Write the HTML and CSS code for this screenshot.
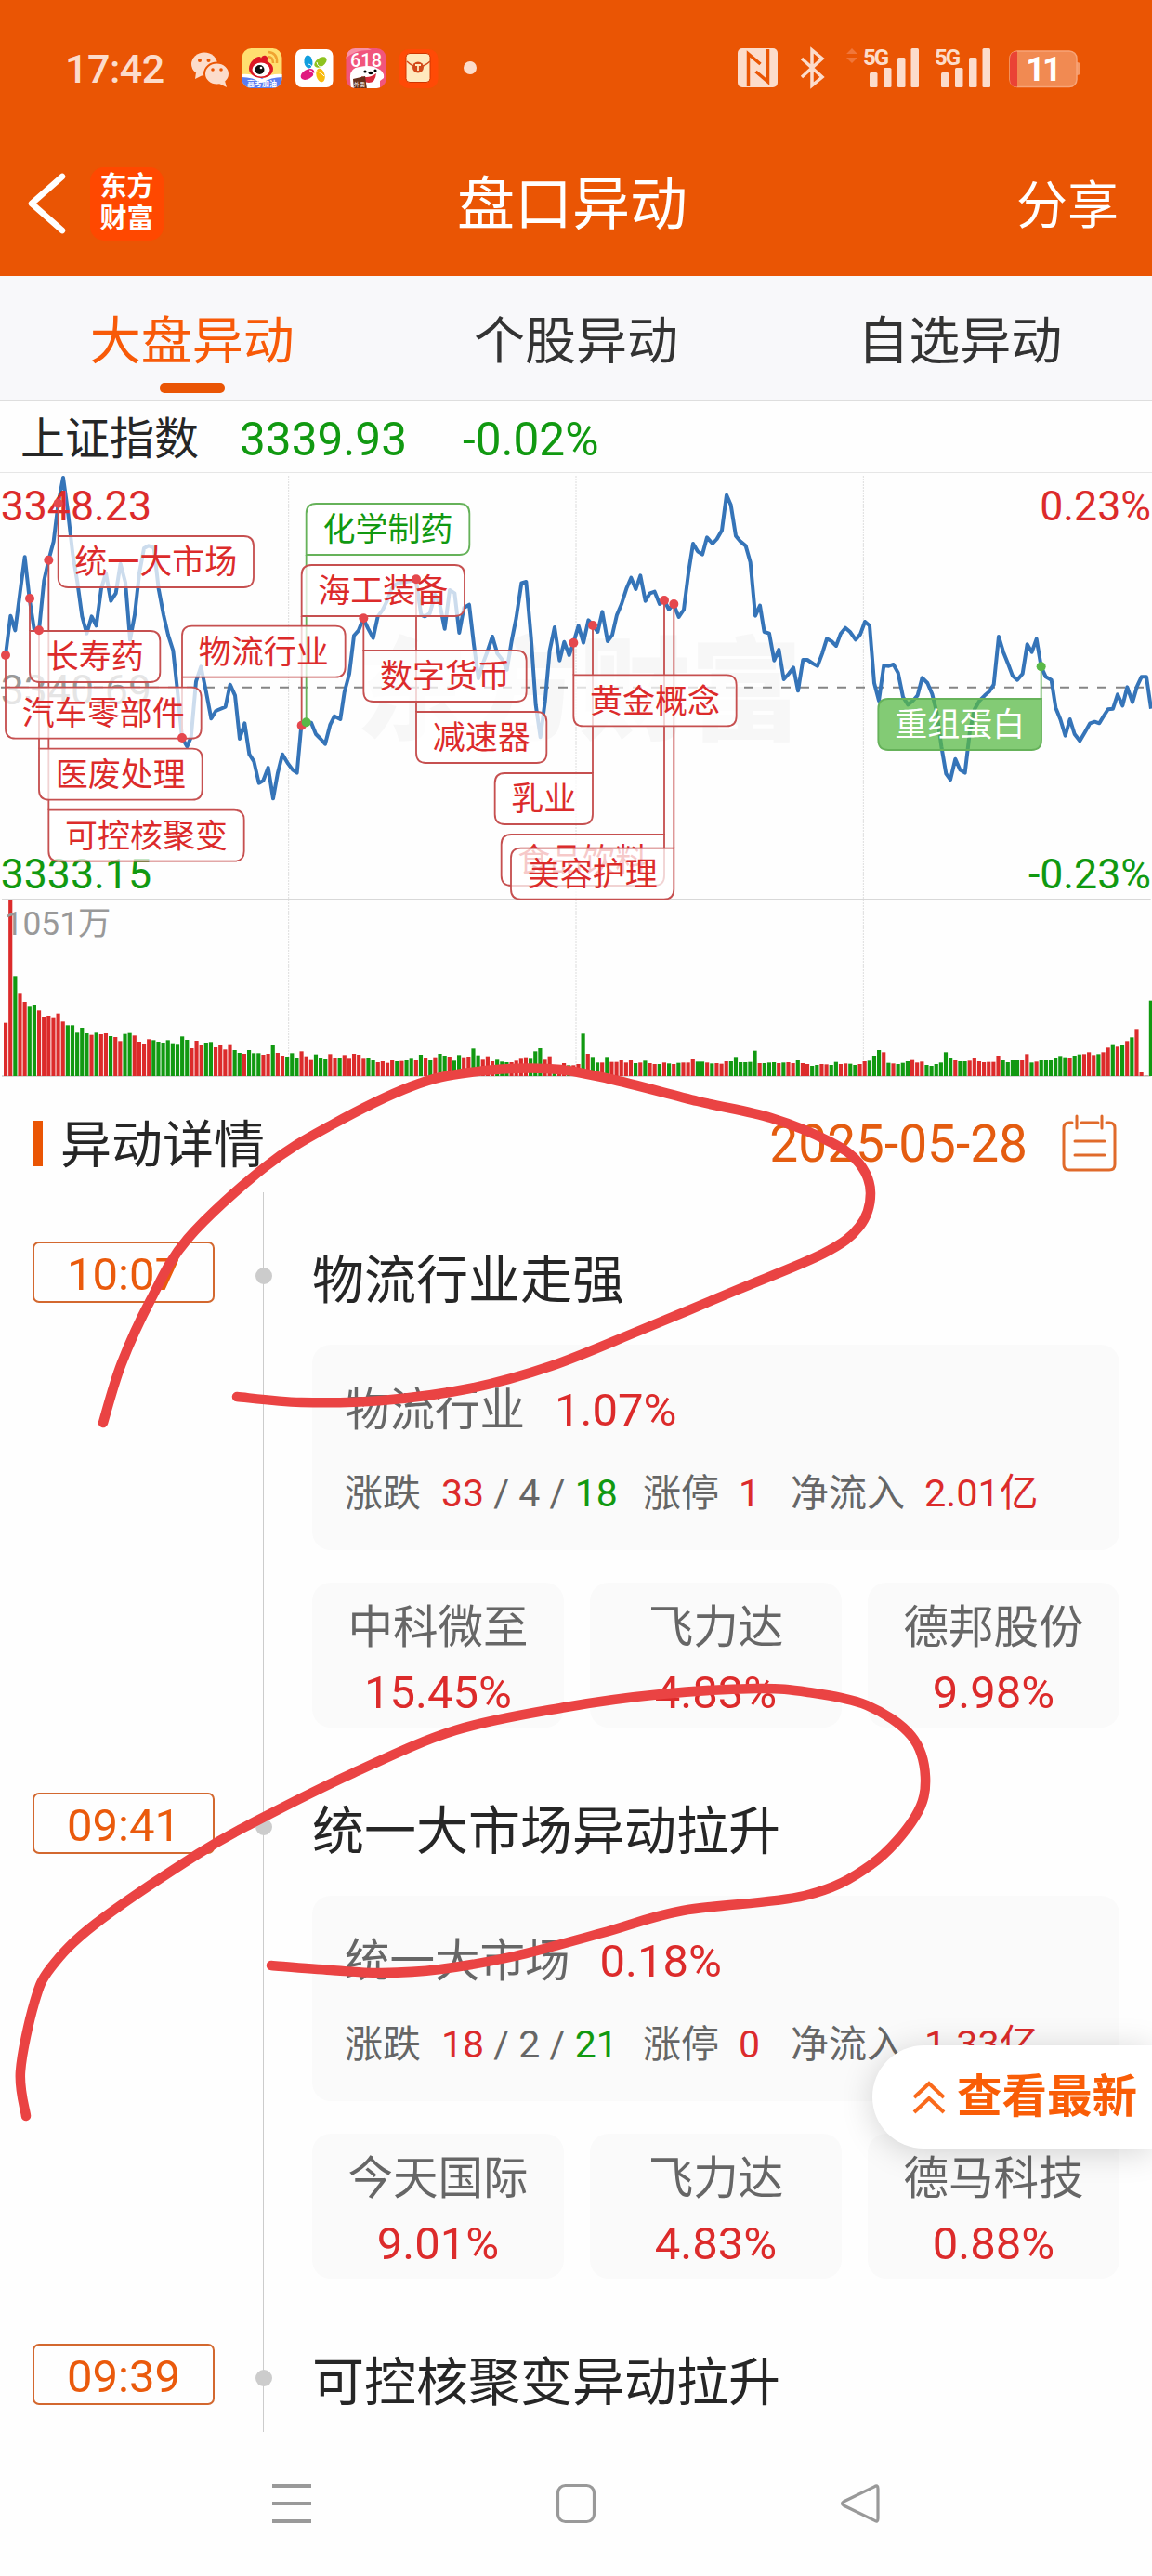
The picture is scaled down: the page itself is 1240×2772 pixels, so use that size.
FILE: index.html
```html
<!DOCTYPE html>
<html lang="zh-CN">
<head>
<meta charset="utf-8">
<title>盘口异动</title>
<link rel="stylesheet" href="styles.css">
</head>
<body>
<div class="screen">
  <header class="header">
    <div class="status">
      <span class="clock">17:42</span>
      <svg class="status-left" width="310" height="50" viewBox="0 0 310 50">
        <g fill="#fcdccb">
          <ellipse cx="14" cy="20" rx="14" ry="12.5"/><path d="M5 29l-1 7 8-4z"/>
          <g stroke="#ea5504" stroke-width="2"><ellipse cx="27.500" cy="30.500" rx="13.500" ry="12"/></g>
          <path d="M30 41l8 4-2-7z"/>
          <circle cx="300" cy="24" r="7"/>
        </g>
        <g fill="#ea5504"><circle cx="9" cy="16" r="2"/><circle cx="18.500" cy="16" r="2"/><circle cx="23" cy="26" r="1.800"/><circle cx="32" cy="26" r="1.800"/></g>
        <clipPath id="weibo"><rect x="54.500" y="3" width="43" height="43" rx="10"/></clipPath>
        <g clip-path="url(#weibo)">
          <rect x="54" y="3" width="44" height="44" fill="#ffdf70"/>
          <path d="M54 32q22 6 44 0v15h-44z" fill="#5b7df0"/>
          <path d="M54 31q12-1 22 5 10-6 22-5v3q-12 0-22 6-10-6-22-6z" fill="#fff"/>
          <path d="M62 25c0-7 7-13 11-13 2 0 2 2 2 2s1-4 5-3c4 2 1 5 2 6s6 3 6 8c0 7-7 10-13 10s-13-4-13-10z" fill="#dc1725"/>
          <ellipse cx="75" cy="26" rx="9.500" ry="7.500" fill="#fff"/><circle cx="73.500" cy="26" r="5" fill="#111"/><circle cx="75" cy="24" r="1.300" fill="#fff"/>
          <path d="M82 12q6 0 6 7M83 7q10 1 9 12" fill="none" stroke="#f0a332" stroke-width="2.500"/>
          <text x="76" y="44" class="badge-text">高考加油</text>
        </g>
        <rect x="112" y="4" width="40.500" height="41" rx="7" fill="#fff"/>
        <g transform="translate(132 25)">
          <ellipse cx="-6" cy="-7.500" rx="4.500" ry="7" fill="#129ede" transform="rotate(-8 -6 -7)"/>
          <ellipse cx="7" cy="-7" rx="4.500" ry="7.500" fill="#8ec31f" transform="rotate(55 7 -7)"/>
          <ellipse cx="-7" cy="6" rx="5" ry="8" fill="#e0197f" transform="rotate(60 -7 6)"/>
          <ellipse cx="7" cy="7" rx="4.500" ry="7.500" fill="#f8bb0c" transform="rotate(-15 7 7)"/>
          <path d="M-7-5q5 0 5 5M3-7q1 6 7 5M-5 2q5 0 5 7M3 3q4 0 8 5" stroke="#fff" fill="none"/>
        </g>
        <clipPath id="dog"><rect x="166.500" y="3" width="43" height="43" rx="10"/></clipPath>
        <g clip-path="url(#dog)">
          <rect x="166" y="3" width="44" height="44" fill="#f1557c"/>
          <path d="M166 14q10-10 28-9l-6-3h-22z" fill="#f990a5"/>
          <text x="188" y="23" class="promo-text">618</text>
          <path d="M171 36q-1-12 10-13 13-3 20 2 7 3 6 10l-4 3v10h-31z" fill="#fff"/>
          <path d="M183 33q8 3 16-3-1 10-8 10-6 0-8-7z" fill="#d92b3c"/>
          <circle cx="187" cy="28" r="1.600"/><circle cx="198" cy="27" r="1.600"/><ellipse cx="193" cy="29.500" rx="2.500" ry="1.800"/>
          <path d="M174 36l13-3 2 14h-14z" fill="#65301c"/>
          <text x="181" y="44" class="bag-text">外卖</text>
        </g>
        <rect x="223.500" y="4" width="42" height="42" rx="10" fill="#ff4a06"/>
        <rect x="231" y="8.500" width="26" height="31" rx="4" fill="#ffe9be" stroke="#cf3500"/>
        <path d="M232 17q12 12 25 0" fill="none" stroke="#d2491a" stroke-width="1.500"/>
        <circle cx="244" cy="23.500" r="6" fill="#d2491a"/><path d="M241 21h6M244 21v6" stroke="#ffe9be" stroke-width="1.800"/>
      </svg>
      <svg class="status-right" width="376" height="70" viewBox="788 40 376 70" fill="#fcdccb">
        <rect x="794" y="53" width="43" height="42" rx="5"/>
        <path d="M805.500 94V59l13 11M826.500 54v35l-13-11" fill="none" stroke="#ea5504" stroke-width="3.500"/>
        <path d="M863 64l22 20-11 9V55l11 9-22 20" fill="none" stroke="#fcdccb" stroke-width="3.500"/>
        <path d="M911 59h12l-6-6zM911 63h12l-6 6z" fill="#f0763a"/>
        <text x="929" y="71" class="net-text">5G</text>
        <rect x="936" y="79" width="8.500" height="16" rx="1.500"/><rect x="951" y="74" width="8.500" height="21" rx="1.500"/><rect x="966" y="63" width="8.500" height="32" rx="1.500"/><rect x="980.500" y="53" width="8.500" height="42" rx="1.500"/>
        <text x="1006" y="71" class="net-text">5G</text>
        <rect x="1013" y="79" width="8.500" height="16" rx="1.500"/><rect x="1028" y="74" width="8.500" height="21" rx="1.500"/><rect x="1043" y="63" width="8.500" height="32" rx="1.500"/><rect x="1057.500" y="53" width="8.500" height="42" rx="1.500"/>
        <path d="M1159 68q4 0 4 3v8q0 3-4 3z" fill="#f59a68"/>
        <rect x="1087" y="56" width="72" height="38.500" rx="8" fill="#f18a52" stroke="#f7a478" stroke-width="1.500"/>
        <path d="M1095 56.500h-1q-7 0-7 8v22q0 8 7 8h1z" fill="#ea4335"/>
        <text x="1122" y="88" class="battery-text">11</text>
      </svg>
    </div>
    <div class="titlebar">
      <div class="titlebar-left">
        <svg width="44" height="66" viewBox="0 0 44 66"><path d="M39 4L6 33l33 29" fill="none" stroke="#fff" stroke-width="6.500" stroke-linejoin="round" stroke-linecap="round"/></svg>
        <div class="logo">东方<br>财富</div>
      </div>
      <h1 class="title">盘口异动</h1>
      <span class="share">分享</span>
    </div>
  </header>

  <nav class="tabs">
    <span class="tab tab-active">大盘异动</span>
    <span class="tab">个股异动</span>
    <span class="tab">自选异动</span>
  </nav>

  <div class="index-row">
    <span class="index-name">上证指数</span>
    <span class="index-value">3339.93</span>
    <span class="index-change">-0.02%</span>
  </div>

  <svg class="chart" viewBox="0 24 3720 1956">
    <text x="1149" y="862" class="watermark">东方财富</text>
    <path class="grid" d="M932 37V1974M1860 37V1974M2788 37V1974"/>
    <path d="M0 24H3720" stroke="#e6e6e6" stroke-width="6"/>
    <path d="M6 1404H3716M6 1974H3716" stroke="#d8d8d8" stroke-width="6"/>
    <path d="M3 719.500H3716" stroke="#858585" stroke-width="6" stroke-dasharray="30 30"/>
    <g id="volume"></g>
    <polyline class="price" points="18,615 34,488 49,535 65,410 80,298 95,432 110,530 126,535 142,375 157,308 173,248 188,125 204,42 219,150 235,290 250,380 265,490 280,545 296,490 311,520 327,400 342,350 358,440 374,415 389,320 405,380 420,565 435,485 450,350 465,270 480,262 497,268 512,400 528,485 543,550 559,600 574,740 588,882 604,910 617,880 633,700 649,652 665,730 682,820 697,795 728,782 743,710 759,745 774,885 790,835 805,935 820,958 836,1028 850,1020 866,978 882,1078 897,995 912,935 930,965 945,985 959,995 973,842 989,832 1005,833 1020,870 1035,885 1050,902 1066,840 1080,812 1099,822 1112,735 1128,675 1143,552 1158,535 1173,497 1189,530 1205,560 1220,490 1235,470 1250,440 1265,400 1280,385 1297,380 1312,378 1328,375 1343,372 1360,485 1372,490 1388,480 1405,420 1420,450 1436,530 1452,405 1468,415 1483,543 1498,462 1515,452 1530,580 1545,690 1560,640 1575,600 1590,555 1606,610 1622,630 1637,662 1652,570 1667,495 1684,382 1699,378 1715,560 1730,775 1745,880 1760,765 1775,600 1791,525 1807,632 1822,572 1838,615 1852,575 1868,520 1884,575 1900,502 1914,518 1930,540 1945,475 1962,570 1977,550 1992,485 2007,450 2023,400 2038,365 2053,402 2068,358 2084,440 2099,415 2114,410 2130,450 2145,438 2160,468 2175,450 2192,492 2208,468 2223,350 2238,255 2253,280 2268,290 2283,235 2301,255 2315,240 2331,212 2346,98 2360,130 2376,230 2391,248 2408,262 2423,315 2439,488 2454,455 2468,540 2484,545 2500,632 2515,597 2531,693 2547,675 2562,655 2577,730 2593,630 2607,630 2625,642 2640,650 2655,610 2670,562 2685,570 2700,585 2715,545 2730,527 2745,540 2763,565 2778,548 2793,507 2808,520 2823,705 2838,762 2854,648 2870,650 2885,645 2900,672 2916,750 2932,775 2948,762 2963,745 2978,688 2995,705 3010,740 3025,800 3040,910 3055,998 3069,1017 3085,950 3100,985 3116,995 3132,860 3147,790 3163,762 3180,745 3195,732 3209,710 3225,555 3240,605 3256,645 3270,682 3285,695 3302,675 3317,580 3332,605 3347,563 3362,652 3377,685 3395,695 3409,785 3424,822 3440,875 3455,822 3470,870 3487,892 3503,865 3520,835 3535,830 3550,835 3565,810 3578,790 3594,788 3609,742 3625,778 3640,718 3657,767 3672,715 3686,685 3702,685 3717,788"/>
    <g class="axis">
      <text x="2" y="181" fill="#dc2b2b">3348.23</text>
      <text x="2" y="773" fill="#999">3340.69</text>
      <text x="2" y="1368" fill="#119911">3333.15</text>
      <text x="3717" y="181" fill="#dc2b2b" text-anchor="end">0.23%</text>
      <text x="3717" y="1368" fill="#119911" text-anchor="end">-0.23%</text>
      <text x="14" y="1518" class="volume-label">1051万</text>
    </g>
    <g id="tags"></g>
  </svg>

  <section class="details">
    <div class="details-head">
      <h2 class="details-title">异动详情</h2>
      <span class="date">2025-05-28</span>
      <svg width="62" height="64" viewBox="0 0 62 64" fill="none" stroke="#e06a2b" stroke-width="3" stroke-linecap="round"><path d="M12 9H9q-6 0-6 6v39q0 6 6 6h43q6 0 6-6V15q0-6-6-6h-3M22 9h18M17 2v13M44 2v13M15 29h32M15 44h32"/></svg>
    </div>

    <article class="event">
      <div class="time">10:07</div>
      <div class="rail"></div>
      <div class="event-body">
        <h3 class="event-title">物流行业走强</h3>
        <div class="sector">
          <div class="sector-head"><span>物流行业</span><span class="up big">1.07%</span></div>
          <div class="stats"><span>涨跌</span><span class="breadth"><b class="up">33</b> / 4 / <b class="down">18</b></span><span>涨停</span><span class="limit up">1</span><span>净流入</span><span class="up">2.01亿</span></div>
        </div>
        <div class="stocks">
          <div class="stock"><span>中科微至</span><span class="up big">15.45%</span></div>
          <div class="stock"><span>飞力达</span><span class="up big">4.83%</span></div>
          <div class="stock"><span>德邦股份</span><span class="up big">9.98%</span></div>
        </div>
      </div>
    </article>

    <article class="event">
      <div class="time">09:41</div>
      <div class="rail"></div>
      <div class="event-body">
        <h3 class="event-title">统一大市场异动拉升</h3>
        <div class="sector">
          <div class="sector-head"><span>统一大市场</span><span class="up big">0.18%</span></div>
          <div class="stats"><span>涨跌</span><span class="breadth"><b class="up">18</b> / 2 / <b class="down">21</b></span><span>涨停</span><span class="limit up">0</span><span>净流入</span><span class="up">1.33亿</span></div>
        </div>
        <div class="stocks">
          <div class="stock"><span>今天国际</span><span class="up big">9.01%</span></div>
          <div class="stock"><span>飞力达</span><span class="up big">4.83%</span></div>
          <div class="stock"><span>德马科技</span><span class="up big">0.88%</span></div>
        </div>
      </div>
    </article>

    <article class="event event-last">
      <div class="time">09:39</div>
      <div class="rail"></div>
      <div class="event-body">
        <h3 class="event-title">可控核聚变异动拉升</h3>
      </div>
    </article>
  </section>

  <footer class="navbar">
    <svg width="44" height="44" viewBox="0 0 44 44" stroke="#999" stroke-width="3.800"><path d="M1 3h42M1 22h42M1 41h42"/></svg>
    <svg width="44" height="44" viewBox="0 0 44 44"><rect x="2.500" y="2.500" width="39" height="39" rx="8" fill="none" stroke="#999" stroke-width="3.200"/></svg>
    <svg width="44" height="44" viewBox="0 0 44 44"><path d="M37 4Q41 1 41 6V38Q41 43 37 40L4 24Q1 22 4 20Z" fill="none" stroke="#999" stroke-width="3.200"/></svg>
  </footer>

  <div class="latest">
    <svg width="36" height="38" viewBox="0 0 36 38" fill="none" stroke="#f96a1c" stroke-width="4"><path d="M2 19L18 4l16 15M2 35l16-15 16 15"/></svg>
    <span>查看最新</span>
  </div>

  <svg class="ink" id="ink" width="1240" height="2772" viewBox="0 0 1240 2772"></svg>
</div>
<script src="chart.js"></script>
</body>
</html>
```
FILE: styles.css
```css
* { box-sizing: border-box; }

body {
  margin: 0;
  background: #fefefe;
  color: #262626;
  font-family: Roboto, "Noto Sans CJK SC", sans-serif;
}

h1, h2, h3 { margin: 0; font-weight: 400; }
b { font-weight: 400; }
svg { display: block; flex: none; }

.screen { position: relative; width: 1240px; height: 2772px; overflow: hidden; }

.header { height: 297px; background: #ea5504; color: #fff; }

.status { display: flex; align-items: center; height: 148px; padding-left: 70px; }
.clock { width: 136px; font-size: 43px; font-weight: 500; letter-spacing: -.5px; line-height: 50px; color: #fcdccb; }
.status-right { margin-left: 272px; }
.badge-text { font-size: 8px; font-weight: 700; fill: #fff; text-anchor: middle; }
.promo-text { font-size: 20px; fill: #fff; text-anchor: middle; font-weight: 500; }
.bag-text { font-size: 6px; fill: #fff; text-anchor: middle; }
.net-text { font-size: 24px; font-weight: 700; letter-spacing: -2px; }
.battery-text { font-size: 36px; font-weight: 700; fill: #fff; text-anchor: middle; letter-spacing: -3px; }

.titlebar { display: grid; grid-template-columns: 1fr auto 1fr; align-items: center; height: 142px; padding: 0 36px 0 28px; }
.titlebar-left { display: flex; align-items: center; gap: 25px; }
.logo { width: 79px; height: 79px; padding-top: 4px; border-radius: 15px; background: #ff4800; font-size: 29px; font-weight: 700; line-height: 34px; text-align: center; }
.title { padding: 4px 0 0 8px; margin-right: 8px; font-size: 62px; line-height: 80px; }
.share { justify-self: end; padding-top: 3px; font-size: 55px; line-height: 70px; }

.tabs { display: grid; grid-template-columns: repeat(3, 1fr); height: 134px; background: #f8f8fa; border-bottom: 1px solid #dedede; }
.tab { display: flex; flex-direction: column; align-items: center; padding-top: 35px; font-size: 55px; line-height: 70px; color: #333; }
.tab-active { color: #f85a08; }
.tab-active::after { content: ""; width: 70px; height: 11px; margin-top: 10px; border-radius: 5px; background: #ea5504; }

.index-row { display: flex; align-items: center; height: 77px; padding: 6px 0 0 22px; font-size: 48px; line-height: 60px; }
.index-value { margin-left: 44px; font-size: 49.500px; color: #119911; }
.index-change { margin-left: 60px; font-size: 49.500px; color: #119911; }

.chart { width: 1240px; height: 652px; }
.watermark { font-size: 360px; font-weight: 900; fill: #f7f7f7; }
.grid { stroke: #ccc; stroke-width: 3; stroke-dasharray: 4 5; }
.price { fill: none; stroke: #3574b8; stroke-width: 12; stroke-linejoin: round; }
.axis { font-size: 134px; }
.volume-label { font-size: 106px; fill: #999; }
.bar-up { fill: #dc2b2b; }
.bar-down { fill: #119911; }
.leader, .tag { stroke-width: 5.500; stroke: #c65050; }
.tag { fill: rgba(255, 255, 255, .75); }
.tag-text { font-size: 105px; fill: #dc2b2b; text-anchor: middle; }
.dot { fill: #e5484d; }
.falling .leader, .falling .tag { stroke: #66b25a; }
.falling .tag-text { fill: #119911; }
.falling .dot { fill: #5ab947; }
.solid .tag { fill: rgba(90, 185, 71, .75); }
.solid .tag-text { fill: #fff; }

.details-head { display: flex; align-items: center; height: 123px; padding: 18px 36px 0 35px; }
.details-title { display: flex; align-items: center; flex: 1; padding-top: 2px; font-size: 55px; line-height: 66px; }
.details-title::before { content: ""; width: 11px; height: 49px; margin: -2px 19px 0 0; background: #ea5504; }
.date { margin-right: 36px; padding-top: 1px; font-size: 55px; line-height: 64px; color: #e45c10; }

.event { display: flex; height: 593px; padding-left: 35px; }
.event-last { height: 148px; overflow: hidden; }
.time { width: 196px; height: 66px; margin-top: 53px; border: 2px solid #d3682f; border-radius: 7px; font-size: 49px; line-height: 67px; text-align: center; color: #ea5a0c; }
.rail { display: flex; justify-content: center; width: 105px; padding-top: 81px; background: linear-gradient(#ccc, #ccc) 52px 0 / 1px 100% no-repeat; }
.rail::before { content: ""; width: 18px; height: 18px; border-radius: 50%; background: #ccc; }
.event-body { width: 869px; padding-top: 62px; }
.event-title { font-size: 56px; line-height: 66px; margin-bottom: 36px; }

.sector { height: 221px; padding: 39px 0 0 35px; border-radius: 20px; background: #fafafa; color: #666; }
.sector-head { display: flex; gap: 32px; font-size: 48.500px; line-height: 64px; }
.stats { display: flex; margin-top: 27px; font-size: 41px; line-height: 60px; white-space: nowrap; }
.breadth { width: 217px; margin-left: 22px; }
.limit { width: 56px; margin-left: 21px; }
.stats span:last-child { margin-left: 21px; font-size: 41.500px; }
.up { color: #dc2b2b; }
.down { color: #119911; }
.big { font-size: 49px; }

.stocks { display: grid; grid-template-columns: repeat(3, 271px); gap: 28px; margin-top: 35px; }
.stock { display: flex; flex-direction: column; align-items: center; gap: 6px; height: 156px; padding-top: 17px; border-radius: 20px; background: #fafafa; color: #666; font-size: 48.500px; line-height: 64px; }

.navbar { display: flex; justify-content: space-between; height: 155px; padding: 55px 292px 0; }

.latest { position: absolute; right: 0; top: 2201px; display: flex; align-items: center; gap: 12px; width: 301px; height: 111px; padding-left: 43px; border-radius: 56px 0 0 56px; background: #fff; box-shadow: 0 4px 34px rgba(0, 0, 0, .17); font-size: 48.500px; line-height: 66px; font-weight: 700; color: #f95d07; white-space: nowrap; }

.ink { position: absolute; left: 0; top: 0; fill: none; stroke: #ea4343; stroke-width: 10.500; stroke-linecap: round; pointer-events: none; }
```
FILE: chart.js
```js
const NS = "http://www.w3.org/2000/svg";
function add(parent, name, attrs, text) {
  const el = document.createElementNS(NS, name);
  for (const key in attrs) el.setAttribute(key, attrs[key]);
  if (text) el.textContent = text;
  parent.appendChild(el);
  return el;
}

// Volume bars, one per minute step: colour letter plus level below the session base.
const sessions = [
  { first: 0, base: 654, bars: "r482 r87 g331 r388 r414 g430 g424 r442 r462 r459 r464 r452 r478 g490 g490 g514 g498 g516 r521 g514 r519 r516 g525 r528 r541 g518 g515 r523 r543 r549 r535 g538 g543 g546 g538 g548 g550 g526 g537 r564 r540 r552 g546 g544 r561 r552 r568 r551 g570 g579 r582 g570 g580 g580 r585 r582 g553 r579 r588 g591 g580 g595 r574 r590 r602 g584 g594 g600 r583 r595 g595 r586 r598 r582 r585 r598 g597 g603 r609 r606 r611 r603 g606 r605 g603 g598 r603 g585 r596 g603 r593 g582 g588 r591 g604 g586 r593 r591 g565 g587 r601 r590 r606 g601 g607 g609 r609 r604 r598 r593 g598 g574 g564 r601 r590 g618 r621 r612 g619 r619 r615" },
  { first: 121, base: 234, bars: "g97 r162 g172 g190 r190 g172 r188 r188 r183 r190 r183 g192 r190 g184 r192 r195 g195 r190 g193 r195 g191 r190 r190 r180 g187 g187 r190 g193 r192 r194 r186 g186 g172 g189 g189 g188 g152 r192 g192 g190 g189 r192 g190 r189 r192 g183 r192 r195 g201 g198 r195 r196 g198 g188 r195 r193 g194 g198 r195 r186 g184 g168 g150 r157 g191 r193 g195 g191 g186 r182 r190 r187 g198 g201 g195 g190 g157 g174 r183 g186 g186 r184 r175 r186 r189 r188 r188 r168 g183 g189 g183 g183 r183 r163 g190 r187 g183 g183 g183 g177 g169 g173 r174 g168 g164 r163 r157 r166 g163 r157 r142 g131 r139 g132 r121 g109 r82 r222 r233 g-10" }
];
const volume = document.getElementById("volume");
for (const s of sessions) {
  s.bars.split(" ").forEach((bar, i) => {
    const height = s.base - Number(bar.slice(1));
    add(volume, "rect", {
      class: bar[0] === "r" ? "bar-up" : "bar-down",
      x: 18 + (s.first + i) * 15.41 - 6, y: 1974 - height, width: 12.5, height
    });
  });
}

// label, left, top, right, anchor x, anchor y, state
const tags = [
  ["汽车零部件", 18, 719, 650, 18, 615, ""],
  ["长寿药", 96, 537, 517, 96, 432, ""],
  ["医废处理", 126, 917, 653, 126, 535, ""],
  ["可控核聚变", 157, 1115, 788, 157, 308, ""],
  ["统一大市场", 188, 231, 819, 188, 125, ""],
  ["物流行业", 588, 521, 1115, 588, 882, ""],
  ["海工装备", 974, 324, 1500, 974, 842, ""],
  ["化学制药", 989, 126, 1516, 989, 832, "falling"],
  ["数字货币", 1174, 600, 1700, 1174, 496, ""],
  ["减速器", 1344, 798, 1765, 1344, 370, ""],
  ["黄金概念", 1852, 679, 2378, 1852, 575, ""],
  ["乳业", 1598, 996, 1914, 1914, 519, ""],
  ["食品饮料", 1619, 1194, 2145, 2145, 438, ""],
  ["美容护理", 1650, 1238, 2176, 2176, 450, ""],
  ["重组蛋白", 2836, 756, 3363, 3362, 652, "falling solid"]
];
const layer = document.getElementById("tags");
const H = 165, R = 32;
for (const [, , top, , ax, ay, state] of tags) {
  const g = add(layer, "g", { class: state });
  add(g, "path", { class: "leader", d: `M${ax} ${ay}V${ay < top ? top : top + H}` });
}
for (const [label, left, top, right, ax, ay, state] of tags) {
  const below = top > ay, atLeft = ax === left, bottom = top + H;
  const tl = below && atLeft ? 0 : R, tr = below && !atLeft ? 0 : R;
  const bl = !below && atLeft ? 0 : R, br = R;
  const g = add(layer, "g", { class: state });
  add(g, "path", {
    class: "tag",
    d: `M${left + tl} ${top}H${right - tr}q${tr} 0 ${tr} ${tr}V${bottom - br}q0 ${br} ${-br} ${br}H${left + bl}q${-bl} 0 ${-bl} ${-bl}V${top + tl}q0 ${-tl} ${tl} ${-tl}z`
  });
  add(g, "text", { class: "tag-text", x: (left + right) / 2, y: top + 121 }, label);
}
for (const [, , , , ax, ay, state] of tags) {
  const g = add(layer, "g", { class: state });
  add(g, "circle", { class: "dot", cx: ax, cy: ay, r: 15 });
}

// Freehand marker strokes, smoothed through their sample points.
const strokes = [
  [[111,1531],[130.5,1468],[162,1399],[202,1333],[285,1256],[356,1211],[443,1169],[506,1154],[589,1150],[656,1161],[751,1185],[830,1203],[894,1229],[925,1252],[937,1284],[925,1320],[886,1349],[791,1389],[688,1432],[593,1470],[506,1494],[411,1507],[324,1509],[255,1503]],
  [[28,2277],[22,2229],[37,2155],[55,2117],[103,2070],[213,1995],[277,1959],[380,1908],[490,1862],[609,1837],[712,1823],[814,1817],[870,1821],[933,1835],[981,1868],[996,1912],[985,1955],[937,2007],[866,2040],[735,2056],[648,2080],[554,2105],[474,2119],[411,2123],[356,2120],[292,2115]]
];
const ink = document.getElementById("ink");
for (const p of strokes) {
  let d = `M${p[0]}`;
  for (let i = 0; i < p.length - 1; i++) {
    const a = p[i - 1] || p[i], b = p[i], c = p[i + 1], e = p[i + 2] || c;
    d += `C${b[0] + (c[0] - a[0]) / 6} ${b[1] + (c[1] - a[1]) / 6} ${c[0] - (e[0] - b[0]) / 6} ${c[1] - (e[1] - b[1]) / 6} ${c}`;
  }
  add(ink, "path", { d });
}
```
